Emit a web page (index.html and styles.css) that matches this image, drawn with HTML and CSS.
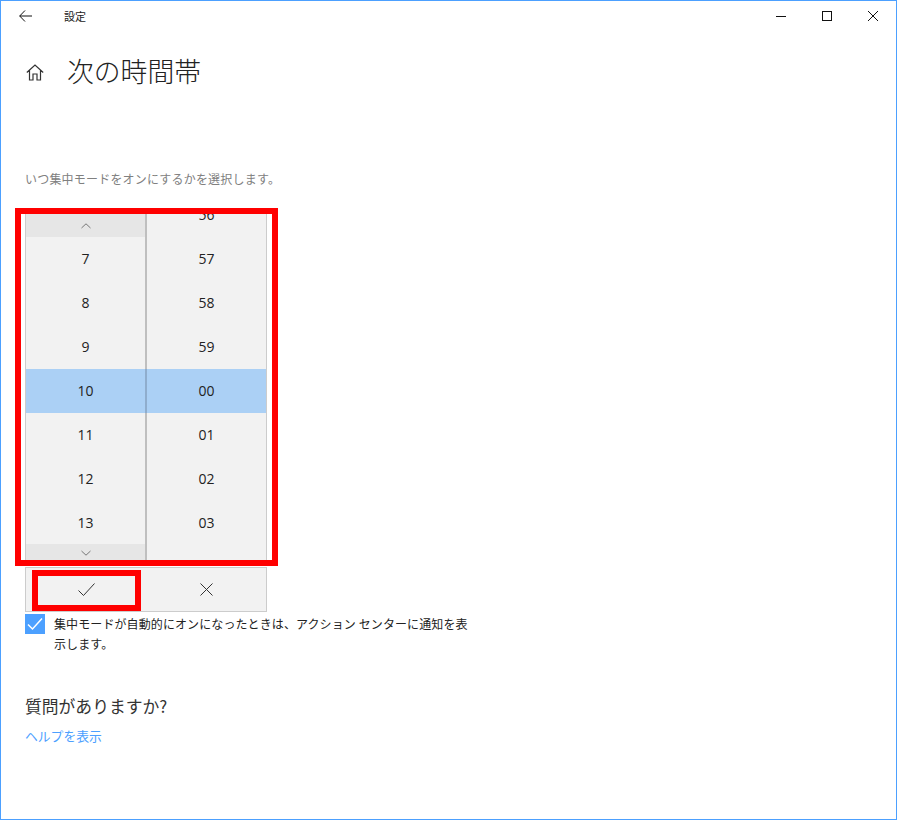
FILE: index.html
```html
<!DOCTYPE html>
<html lang="ja">
<head>
<meta charset="utf-8">
<title>設定</title>
<link rel="stylesheet" href="styles.css">
</head>
<body>
<div class="window">
  <header class="titlebar">
    <div class="title-left">
      <svg class="back" width="13" height="12" viewBox="0 0 13 12"><path d="M6 .5.700 6 6 11.500M.700 6H13" fill="none" stroke="#111" stroke-width="1"/></svg>
      <span class="app-name">設定</span>
    </div>
    <div class="controls">
      <svg width="10" height="10" viewBox="0 0 10 10"><path d="M0 5.500h10" stroke="#111" stroke-width="1"/></svg>
      <svg width="10" height="10" viewBox="0 0 10 10"><rect x=".5" y=".5" width="9" height="9" fill="none" stroke="#111"/></svg>
      <svg width="10" height="10" viewBox="0 0 10 10"><path d="M0 0l10 10M10 0 0 10" stroke="#111" stroke-width="1"/></svg>
    </div>
  </header>
  <main class="content">
    <div class="heading">
      <svg class="home" width="18" height="17" viewBox="0 0 18 17"><path d="M.8 8.500 9 1l8.200 7.500M3.500 6.500V16h3.500v-6h4v6h3.500V6.500" fill="none" stroke="#333" stroke-width="1.200"/></svg>
      <h1>次の時間帯</h1>
    </div>
    <p class="desc">いつ集中モードをオンにするかを選択します。</p>
    <div class="picker-wrap">
      <div class="picker">
        <div class="col">
          <div class="scroller top"><svg width="10" height="6" viewBox="0 0 10 6"><path d="M.5 5 5 .8 9.500 5" fill="none" stroke="#777"/></svg></div>
          <div class="row">7</div>
          <div class="row">8</div>
          <div class="row">9</div>
          <div class="row sel">10</div>
          <div class="row">11</div>
          <div class="row">12</div>
          <div class="row">13</div>
          <div class="scroller bottom"><svg width="10" height="6" viewBox="0 0 10 6"><path d="M.5 1 5 5.200 9.500 1" fill="none" stroke="#777"/></svg></div>
        </div>
        <div class="divider"><div class="divider-sel"></div></div>
        <div class="col">
          <div class="row clipped">56</div>
          <div class="row">57</div>
          <div class="row">58</div>
          <div class="row">59</div>
          <div class="row sel">00</div>
          <div class="row">01</div>
          <div class="row">02</div>
          <div class="row">03</div>
        </div>
      </div>
      <div class="actions">
        <button class="act"><svg width="17" height="13" viewBox="0 0 17 13"><path d="M.5 7.500 5.500 12.500 16.500.5" fill="none" stroke="#333"/></svg></button>
        <button class="act"><svg width="13" height="13" viewBox="0 0 13 13"><path d="M.5.500l12 12M12.500.500l-12 12" fill="none" stroke="#333"/></svg></button>
      </div>
      <div class="frame frame-picker"></div>
      <div class="frame frame-check"></div>
    </div>
    <div class="check-row">
      <span class="checkbox"><svg width="20" height="20" viewBox="0 0 20 20"><path d="M3 10.500 7.500 15 17 4.500" fill="none" stroke="#fff" stroke-width="1.500"/></svg></span>
      <span class="check-label">集中モードが自動的にオンになったときは、アクション センターに通知を表示します。</span>
    </div>
    <h2>質問がありますか?</h2>
    <a class="help" href="#">ヘルプを表示</a>
  </main>
</div>
</body>
</html>
```
FILE: styles.css
```css
* { box-sizing: border-box; }
html, body { margin: 0; height: 100%; background: #fff; }
body { font-family: "Noto Sans CJK JP", "Open Sans", sans-serif; color: #111; }
.window { width: 897px; height: 820px; border: 1px solid #4ca0ff; display: flex; flex-direction: column; overflow: hidden; }
.titlebar { height: 30px; display: flex; justify-content: space-between; flex: none; }
.title-left { display: flex; align-items: center; }
.back { margin-left: 18px; }
.app-name { margin-left: 32px; font-size: 11px; color: #222; }
.controls { display: flex; align-items: center; gap: 36px; padding-right: 18px; }
.content { padding-left: 24px; flex: 1; }
.heading { display: flex; align-items: center; height: 32px; margin-top: 25px; }
.home { flex: none; margin-left: 1px; }
h1 { margin: -3px 0 0 23px; font-size: 26.800px; font-weight: 300; line-height: 32px; color: #222; }
.desc { margin: 82px 0 0; font-size: 12px; letter-spacing: .2px; line-height: 18px; color: #808080; }
.picker-wrap { position: relative; width: 242px; margin-top: 26px; }
.picker { display: flex; width: 242px; height: 347px; background: #f2f2f2; border-left: 1px solid #ccc; border-right: 1px solid #ccc; }
.col { width: 119px; height: 347px; overflow: hidden; background: #f2f2f2; flex: none; }
.divider { position: relative; flex: 1; background: #bfbfbf; }
.divider-sel { position: absolute; left: 0; right: 0; top: 155px; height: 44px; background: #8fadcd; }
.row { height: 44px; padding-bottom: 2px; display: flex; align-items: center; justify-content: center; font-family: "Open Sans", sans-serif; font-size: 14px; color: #222; }
.row.sel { background: #abd0f5; }
.row.clipped { margin-top: -21px; }
.scroller { display: flex; align-items: center; justify-content: center; background: #e6e6e6; }
.scroller.top { height: 23px; }
.scroller.bottom { height: 17px; margin-top: -1px; }
.actions { display: flex; height: 45px; margin-top: 6px; border: 1px solid #ccc; background: #f2f2f2; }
.act { flex: 1; border: 0; padding: 0; background: transparent; display: flex; align-items: center; justify-content: center; }
.frame { position: absolute; border: 6px solid #f00; pointer-events: none; }
.frame-picker { left: -10px; top: -6px; width: 263px; height: 358px; }
.frame-check { left: 7px; top: 356px; width: 109px; height: 41px; }
.check-row { display: flex; align-items: flex-start; width: 450px; margin-top: 2px; }
.checkbox { width: 20px; height: 20px; background: #4ca0ff; flex: none; display: flex; }
.check-label { margin-left: 9px; font-size: 12px; letter-spacing: .1px; line-height: 20px; color: #222; }
h2 { margin: 40px 0 0; font-size: 16.800px; font-weight: 400; line-height: 24px; color: #333; }
.help { display: block; margin-top: 8px; font-size: 12.800px; line-height: 20px; color: #4ca0ff; text-decoration: none; }
```
